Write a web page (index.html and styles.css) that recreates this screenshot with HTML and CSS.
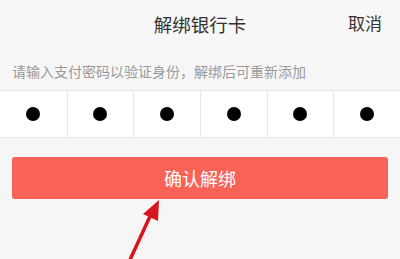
FILE: index.html
```html
<!DOCTYPE html>
<html>
<head>
<meta charset="utf-8">
<link rel="stylesheet" href="styles.css">
</head>
<body>
<div class="page">
  <header class="topbar">
    <div class="title">解绑银行卡</div>
    <div class="cancel">取消</div>
  </header>
  <p class="hint">请输入支付密码以验证身份，解绑后可重新添加</p>
  <div class="pwd">
    <div class="cell"><span class="dot"></span></div>
    <div class="cell"><span class="dot"></span></div>
    <div class="cell"><span class="dot"></span></div>
    <div class="cell"><span class="dot"></span></div>
    <div class="cell"><span class="dot"></span></div>
    <div class="cell"><span class="dot"></span></div>
  </div>
  <div class="actions">
    <button class="confirm">确认解绑</button>
  </div>
  <svg class="arrow" width="400" height="259" viewBox="0 0 400 259">
    <line x1="129" y1="262" x2="152" y2="212" stroke="#d8151c" stroke-width="3.5"/>
    <polygon points="159,200 143,214 158,221" fill="#d8151c"/>
  </svg>
</div>
</body>
</html>
```

FILE: styles.css
```css
html, body {
  margin: 0;
  padding: 0;
}
body {
  background: #f6f6f6;
  font-family: "Noto Sans CJK SC", "Noto Sans", sans-serif;
  width: 400px;
  height: 259px;
  overflow: hidden;
}
.page {
  position: relative;
  width: 400px;
  height: 259px;
}
.topbar {
  height: 50px;
  background: #f7f7f7;
  display: flex;
  align-items: center;
  justify-content: center;
  position: relative;
}
.title {
  font-size: 18.5px;
  color: #333;
  line-height: 1;
  margin-top: -2px;
}
.cancel {
  position: absolute;
  right: 18px;
  top: 14px;
  font-size: 17px;
  line-height: 1;
  color: #333;
}
.hint {
  margin: 0;
  height: 40px;
  padding-left: 12px;
  font-size: 14px;
  line-height: 1;
  color: #9a9a9a;
  display: flex;
  align-items: center;
  box-sizing: border-box;
  padding-top: 2px;
}
.pwd {
  display: grid;
  grid-template-columns: repeat(6, 1fr);
  background: #fff;
  border-top: 1px solid #e6e6e6;
  border-bottom: 1px solid #e6e6e6;
  height: 46px;
}
.cell {
  display: flex;
  align-items: center;
  justify-content: center;
  border-left: 1px solid #e8e8e8;
}
.cell:first-child {
  border-left: none;
}
.dot {
  width: 14px;
  height: 14px;
  border-radius: 50%;
  background: #000;
}
.actions {
  padding: 19px 12px 0;
}
.confirm {
  display: block;
  width: 100%;
  height: 42px;
  border: none;
  border-radius: 3px;
  background: #f96357;
  color: #fff;
  font-family: "Noto Sans CJK SC", "Noto Sans", sans-serif;
  font-size: 18px;
  padding: 0;
}
.arrow {
  position: absolute;
  left: 0;
  top: 0;
  pointer-events: none;
}
```
